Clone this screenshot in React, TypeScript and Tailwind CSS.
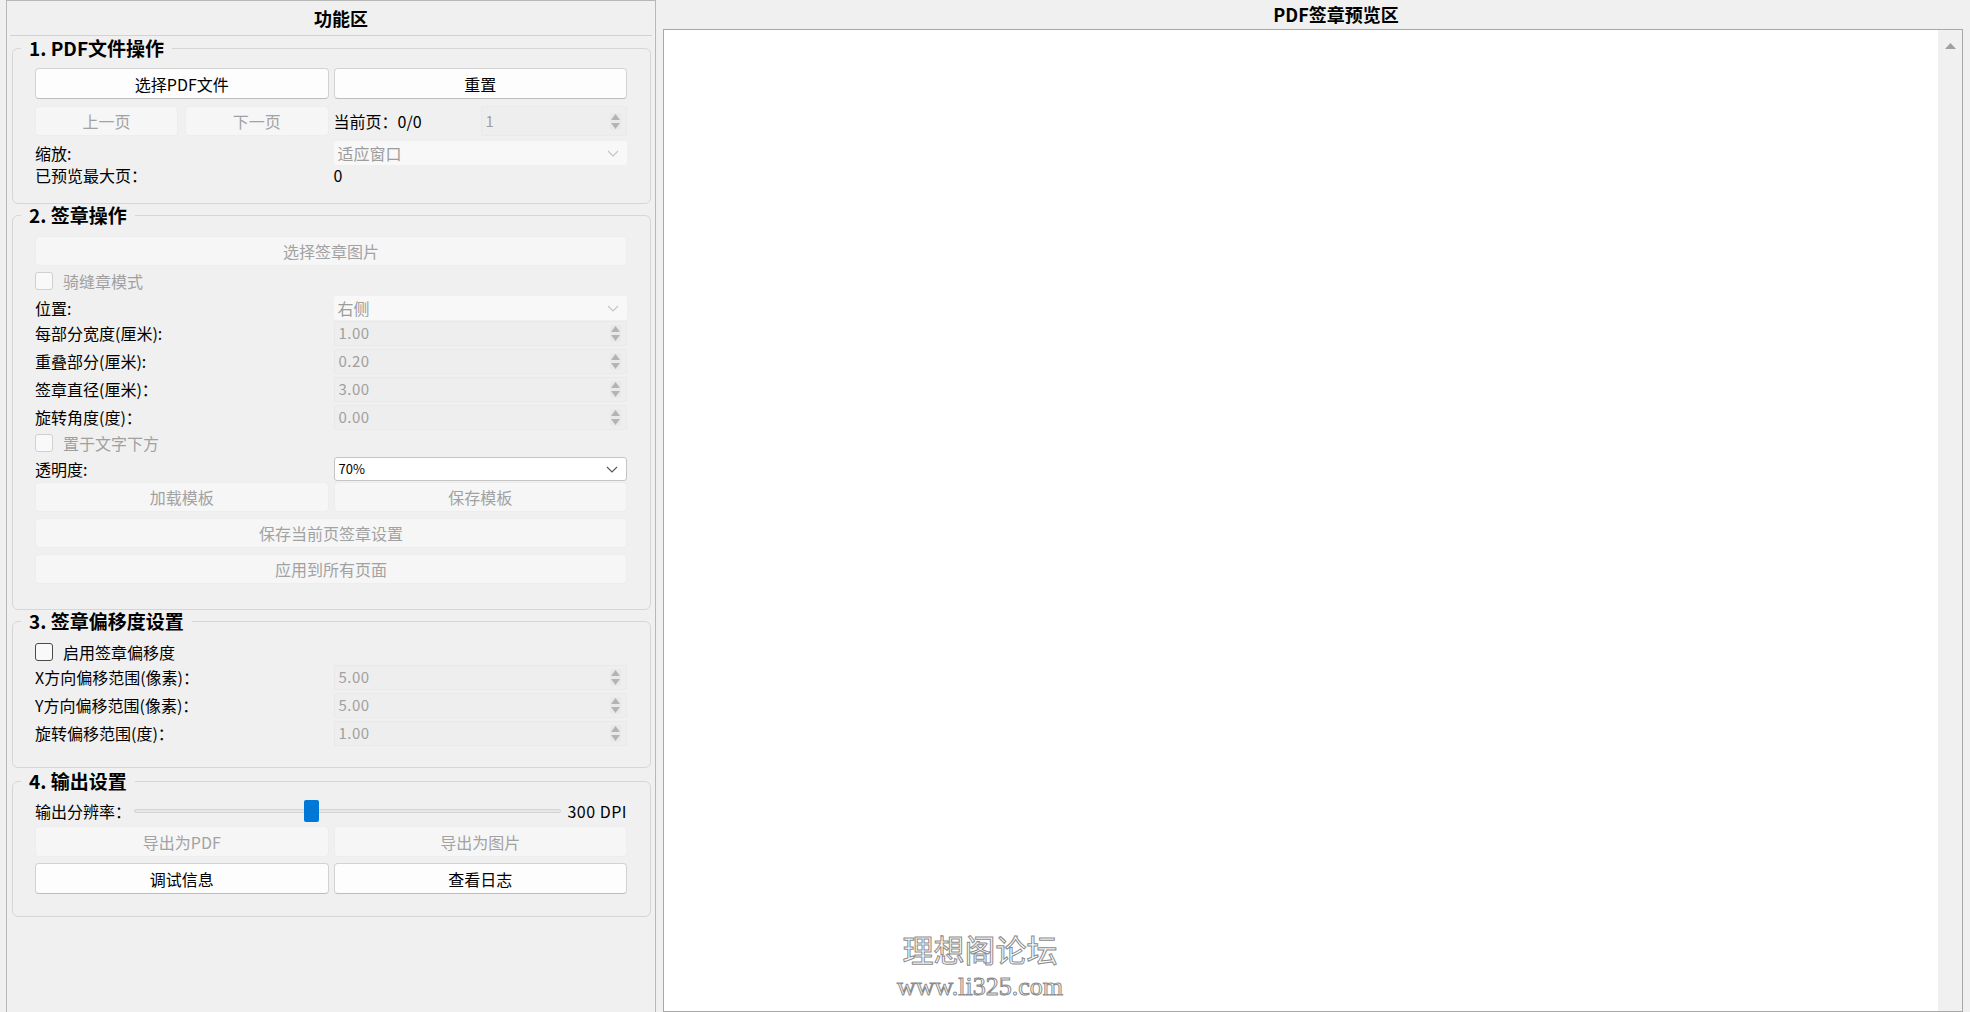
import clsx from "clsx";
import type { ReactNode } from "react";

const Btn = ({
  children,
  disabled,
  className,
}: {
  children: ReactNode;
  disabled?: boolean;
  className?: string;
}) => (
  <div
    className={clsx(
      "flex items-center justify-center rounded-[4px] border text-[16px]",
      disabled
        ? "bg-[#f6f6f6] border-[#ededed] text-[#a2a2a2]"
        : "bg-[#fdfdfd] border-[#d2d2d2] border-b-[#bdbdbd] text-black",
      className
    )}
  >
    {children}
  </div>
);

const Tri = ({ up }: { up?: boolean }) => (
  <svg width="9" height="6" viewBox="0 0 9 6">
    <path d={up ? "M0 6 L4.5 0 L9 6 Z" : "M0 0 L4.5 6 L9 0 Z"} fill="#b4b4b4" />
  </svg>
);

const Spin = ({ value, className }: { value: string; className?: string }) => (
  <div
    className={clsx(
      "flex h-full items-center justify-between rounded-[2px] border border-[#e9e9e9] bg-[#eeeeee] pl-[4px] pr-[5px] text-[15px] text-[#a0a0a0]",
      className
    )}
  >
    <span className="tracking-[0.5px]">{value}</span>
    <div className="flex flex-col gap-[3px] rounded-[2px] bg-[#e9e9e9] px-[1px] py-[1px]">
      <Tri up />
      <Tri />
    </div>
  </div>
);

const Chevron = ({ color }: { color: string }) => (
  <svg width="12" height="7" viewBox="0 0 12 7">
    <path d="M1 1 L6 6 L11 1" fill="none" stroke={color} strokeWidth="1.1" />
  </svg>
);

const Combo = ({ value, enabled }: { value: string; enabled?: boolean }) => (
  <div
    className={clsx(
      "flex h-full items-center justify-between rounded-[3px] pl-[4px] pr-[8px]",
      enabled
        ? "border border-[#c4c4c4] bg-white text-[13px] text-black"
        : "bg-[#f8f8f8] text-[16px] text-[#9c9c9c]"
    )}
  >
    <span>{value}</span>
    <Chevron color={enabled ? "#555555" : "#c4c4c4"} />
  </div>
);

const Check = ({ label, enabled }: { label: string; enabled?: boolean }) => (
  <div className="flex items-center gap-[10px]">
    <div
      className={clsx(
        "h-[18px] w-[18px] rounded-[3px] border bg-[#f9f9f9]",
        enabled ? "border-[#4a4a4a]" : "border-[#d0d0d0]"
      )}
    />
    <span className={clsx("text-[16px]", enabled ? "text-black" : "text-[#a0a0a0]")}>
      {label}
    </span>
  </div>
);

const Group = ({
  title,
  children,
  className,
}: {
  title: string;
  children: ReactNode;
  className?: string;
}) => (
  <fieldset
    className={clsx(
      "ml-[5px] mr-[4px] rounded-[6px] border border-[#d6d6d6] pl-[22px] pr-[23px]",
      className
    )}
  >
    <legend className="ml-[-14px] px-[8px] text-[19px] font-bold leading-[22px] text-black">
      {title}
    </legend>
    {children}
  </fieldset>
);

const SpinRow = ({ label, value, className }: { label: string; value: string; className?: string }) => (
  <div className={clsx("grid h-[24px] grid-cols-2 gap-x-[5px]", className)}>
    <div className="flex items-center text-[16px] text-black">{label}</div>
    <Spin value={value} />
  </div>
);

const ComboRow = ({
  label,
  value,
  enabled,
  className,
}: {
  label: string;
  value: string;
  enabled?: boolean;
  className?: string;
}) => (
  <div className={clsx("grid h-[21px] grid-cols-2 gap-x-[5px]", className)}>
    <div className="flex items-center text-[16px] text-black">{label}</div>
    <Combo value={value} enabled={enabled} />
  </div>
);

export default function App() {
  return (
    <div className="flex h-[1012px] w-[1970px] overflow-hidden bg-[#f0f0f0] font-['Noto_Sans_CJK_SC','Noto_Sans',sans-serif]">
      {/* 功能区 */}
      <div className="ml-[6px] flex h-[1040px] w-[650px] flex-col border border-[#b8b8b8]">
        <div className="flex h-[34px] items-center justify-center pl-[20px] text-[18px] font-bold">
          功能区
        </div>
        <div className="mx-[3px] h-px bg-[#d2d2d2]" />

        <Group title="1. PDF文件操作" className="mt-[1px] pb-[20px] pt-[9px]">
          <div className="grid h-[31px] grid-cols-2 gap-x-[5px]">
            <Btn>选择PDF文件</Btn>
            <Btn>重置</Btn>
          </div>
          <div className="mt-[7px] grid h-[30px] grid-cols-2 gap-x-[5px]">
            <div className="flex gap-[7px]">
              <Btn disabled className="flex-1">
                上一页
              </Btn>
              <Btn disabled className="flex-1">
                下一页
              </Btn>
            </div>
            <div className="flex">
              <div className="flex w-[147px] items-center text-[16px]">当前页：0/0</div>
              <Spin value="1" className="flex-1 pl-[4px]" />
            </div>
          </div>
          <ComboRow label="缩放:" value="适应窗口" className="mt-[5px]" />
          <div className="mt-[1px] grid h-[20px] grid-cols-2 gap-x-[5px] text-[16px]">
            <div className="flex items-center">已预览最大页：</div>
            <div className="flex items-center">0</div>
          </div>
        </Group>

        <Group title="2. 签章操作" className="pb-[25px] pt-[10px]">
          <Btn disabled className="h-[30px]">
            选择签章图片
          </Btn>
          <div className="mt-[4px] flex h-[22px] items-center">
            <Check label="骑缝章模式" />
          </div>
          <ComboRow label="位置:" value="右侧" className="mt-[4px]" />
          <SpinRow label="每部分宽度(厘米):" value="1.00" className="mt-[4px]" />
          <SpinRow label="重叠部分(厘米):" value="0.20" className="mt-[4px]" />
          <SpinRow label="签章直径(厘米)：" value="3.00" className="mt-[4px]" />
          <SpinRow label="旋转角度(度)：" value="0.00" className="mt-[4px]" />
          <div className="mt-[4px] flex h-[20px] items-center">
            <Check label="置于文字下方" />
          </div>
          <ComboRow label="透明度:" value="70%" enabled className="mt-[4px]" />
          <div className="mt-[4px] grid h-[30px] grid-cols-2 gap-x-[5px]">
            <Btn disabled>加载模板</Btn>
            <Btn disabled>保存模板</Btn>
          </div>
          <Btn disabled className="mt-[6px] h-[30px]">
            保存当前页签章设置
          </Btn>
          <Btn disabled className="mt-[6px] h-[30px]">
            应用到所有页面
          </Btn>
        </Group>

        <Group title="3. 签章偏移度设置" className="pb-[22px] pt-[10px]">
          <div className="flex h-[20px] items-center">
            <Check label="启用签章偏移度" enabled />
          </div>
          <SpinRow label="X方向偏移范围(像素)：" value="5.00" className="mt-[3px]" />
          <SpinRow label="Y方向偏移范围(像素)：" value="5.00" className="mt-[4px]" />
          <SpinRow label="旋转偏移范围(度)：" value="1.00" className="mt-[4px]" />
        </Group>

        <Group title="4. 输出设置" className="mt-[2px] pb-[22px] pt-[7px]">
          <div className="flex h-[23px] items-center text-[16px]">
            <div className="w-[99px] whitespace-nowrap">输出分辨率：</div>
            <div className="relative h-[4px] flex-1 rounded-full border border-[#d4d4d4] bg-[#e7e7e7]">
              <div className="absolute left-[169px] top-[-10px] h-[22px] w-[15px] rounded-[2px] bg-[#0078d7]" />
            </div>
            <div className="ml-[6px] tracking-[0.5px]">300 DPI</div>
          </div>
          <div className="mt-[4px] grid h-[31px] grid-cols-2 gap-x-[5px]">
            <Btn disabled>导出为PDF</Btn>
            <Btn disabled>导出为图片</Btn>
          </div>
          <div className="mt-[6px] grid h-[31px] grid-cols-2 gap-x-[5px]">
            <Btn>调试信息</Btn>
            <Btn>查看日志</Btn>
          </div>
        </Group>
      </div>

      {/* PDF签章预览区 */}
      <div className="flex flex-1 flex-col">
        <div className="flex h-[30px] items-center justify-center pl-[46px] text-[18px] font-bold">
          PDF签章预览区
        </div>
        <div className="relative mx-[7px] flex h-[1000px] border border-[#a8a8a8] bg-white">
          <div className="flex-1" />
          <div className="flex w-[24px] justify-center bg-[#f0f0f0] pt-[13px]">
            <svg width="11" height="6" viewBox="0 0 11 6">
              <path d="M0 6 L5.5 0 L11 6 Z" fill="#a0a0a0" />
            </svg>
          </div>
          <div className="absolute left-[231px] top-[896px] flex w-[170px] flex-col items-center text-white [-webkit-text-stroke:1px_#8c8c8c]">
            <div className="text-[31px] leading-[46px]">理想阁论坛</div>
            <div className="font-['Liberation_Serif',serif] text-[26px] leading-[30px]">
              www.li325.com
            </div>
          </div>
        </div>
      </div>
    </div>
  );
}
